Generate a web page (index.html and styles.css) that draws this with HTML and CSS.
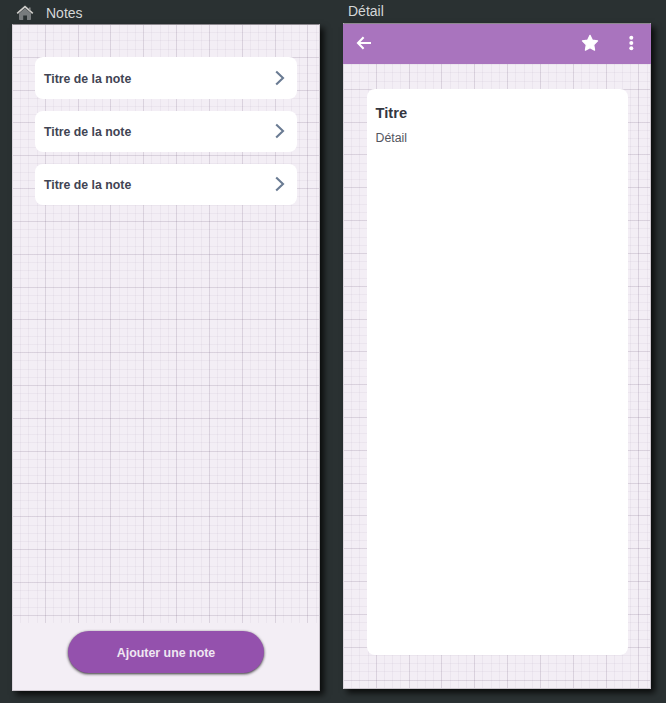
FILE: index.html
```html
<!DOCTYPE html>
<html lang="fr">
<head>
<meta charset="utf-8">
<title>Notes</title>
<link rel="stylesheet" href="styles.css">
</head>
<body>
<main class="board">
  <section class="artboard artboard-notes">
    <header class="label label-notes">
      <svg class="home" width="18" height="16" viewBox="0 0 18 16"><path d="M3 8.6 9 3.2l6 5.4v5.7q0 .7-.7.7H11v-4.4H7.2V15H3.7q-.7 0-.7-.7z" fill="#777b7d"/><path d="M1.2 8.4 9 1.7l7.8 6.7" fill="none" stroke="#cfcdca" stroke-width="1.7"/><path d="M13.8 2.6v2.6" fill="none" stroke="#8e9090" stroke-width="1.5"/></svg>
      <span>Notes</span>
    </header>
    <div class="screen screen-notes">
      <div class="note-list paper">
        <article class="note"><span>Titre de la note</span><svg class="chevron" width="12" height="16" viewBox="0 0 12 16"><path d="M2.2 1.5 9 8l-6.8 6.5"/></svg></article>
        <article class="note"><span>Titre de la note</span><svg class="chevron" width="12" height="16" viewBox="0 0 12 16"><path d="M2.2 1.5 9 8l-6.8 6.5"/></svg></article>
        <article class="note"><span>Titre de la note</span><svg class="chevron" width="12" height="16" viewBox="0 0 12 16"><path d="M2.2 1.5 9 8l-6.8 6.5"/></svg></article>
      </div>
      <footer class="actions"><button class="add" type="button">Ajouter une note</button></footer>
    </div>
  </section>
  <section class="artboard artboard-detail">
    <header class="label label-detail">Détail</header>
    <div class="screen screen-detail">
      <nav class="toolbar">
        <svg class="back" width="16" height="14" viewBox="0 0 16 14"><path d="M7.6 1.3 2 7l5.6 5.7M2 7h13" fill="none" stroke="#fff" stroke-width="2.1"/></svg>
        <svg class="star" width="18" height="18" viewBox="0 0 18 18"><path d="M9 1.3l2.3 4.8 5.3.8-3.9 3.8.9 5.5L9 13.7l-4.6 2.5.9-5.5-3.9-3.8 5.3-.8z" fill="#fff" stroke="#fff" stroke-width="1.2" stroke-linejoin="round"/></svg>
        <svg class="more" width="6" height="16" viewBox="0 0 6 16" fill="#fff"><circle cx="3.3" cy="2.7" r="2"/><circle cx="3.3" cy="8" r="2"/><circle cx="3.3" cy="13.2" r="2"/></svg>
      </nav>
      <div class="detail-body paper">
        <article class="detail-card"><h1>Titre</h1><p>Détail</p></article>
      </div>
    </div>
  </section>
</main>
</body>
</html>
```
FILE: styles.css
```css
* { box-sizing: border-box; }
body {
  margin: 0;
  background: #2a3132;
  font-family: "Liberation Sans", Arial, sans-serif;
}
.board {
  display: flex;
  gap: 23px;
  height: 703px;
  padding-left: 12px;
  overflow: hidden;
}
.artboard { width: 308px; flex: none; }
.label { color: #d5d7d7; font-size: 14px; line-height: 16px; }
.label-notes {
  display: flex;
  gap: 12px;
  height: 24px;
  padding: 5px 0 0 4px;
}
.label-detail { height: 23px; padding: 3px 0 0 5px; }
.screen {
  display: flex;
  flex-direction: column;
  height: 667px;
  background: #f3eef5;
  border: 1px solid #cbc5cd;
  border-top-color: #8d898f;
  border-left-color: #dcd6de;
  box-shadow: 4px 4px 6px rgba(0, 0, 0, .75);
}
.screen-detail { height: 666px; }
.paper {
  --minor: rgba(125, 105, 140, .065);
  --major: rgba(100, 80, 110, .13);
  background-image:
    repeating-linear-gradient(90deg, var(--major) 0 1px, transparent 1px 32.82px),
    repeating-linear-gradient(180deg, var(--major) 0 1px, transparent 1px 32.82px),
    repeating-linear-gradient(90deg, var(--minor) 0 1px, transparent 1px 8.205px),
    repeating-linear-gradient(180deg, var(--minor) 0 1px, transparent 1px 8.205px);
  background-repeat: no-repeat;
  background-size: 400px 800px;
}
.note-list {
  display: flex;
  flex-direction: column;
  gap: 12px;
  height: 598px;
  padding: 32.4px 22px 0;
  background-position: -1px -1px;
}
.note {
  display: flex;
  align-items: center;
  justify-content: space-between;
  height: 41.2px;
  padding: 0 11px 0 9px;
  background: #fff;
  border-radius: 8px;
  color: #414453;
  font-size: 12.3px;
  font-weight: bold;
}
.note span { padding-top: 2px; }
.chevron { fill: none; stroke: #6a7b93; stroke-width: 2.1; }
.actions { display: flex; justify-content: center; padding-top: 8px; }
.add {
  width: 196px;
  height: 42px;
  padding: 2px 0 0;
  border: 0;
  border-radius: 21px;
  background: #9451ad;
  box-shadow: 0 1px 3px rgba(0, 0, 0, .8);
  color: #efe6f2;
  font: bold 12.4px "Liberation Sans", Arial, sans-serif;
}
.toolbar {
  display: flex;
  align-items: center;
  height: 40px;
  margin: 0 -1px;
  padding: 0 17.5px 2px 13px;
  background: #a974be;
}
.star { margin-left: auto; }
.more { margin-left: 29px; }
.detail-body {
  flex: 1;
  padding: 25px 22px 33px 23px;
  background-position: -1px -8px;
}
.detail-card {
  height: 565.5px;
  padding: 16px 8.5px;
  background: #fff;
  border-radius: 8px;
  color: #34363f;
}
.detail-card h1 { margin: 0; font-size: 14.7px; line-height: 17px; }
.detail-card p { margin: 8.5px 0 0; color: #535560; font-size: 12.3px; line-height: 15px; }
```
